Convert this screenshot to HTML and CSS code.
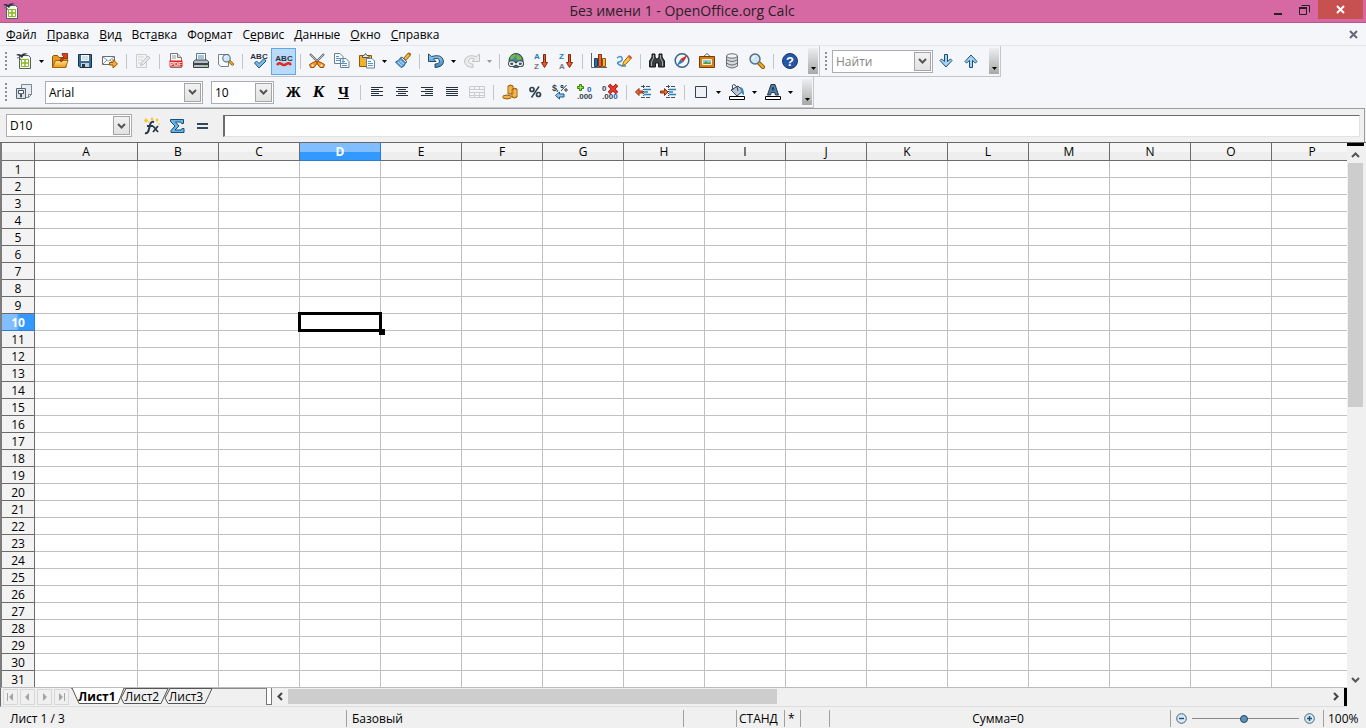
FILE: index.html
```html
<!DOCTYPE html>
<html lang="ru">
<head>
<meta charset="utf-8">
<title>Без имени 1 - OpenOffice.org Calc</title>
<link rel="stylesheet" href="styles.css">
</head>
<body>
<svg class="defs" aria-hidden="true">
  <defs>
    <linearGradient id="gold" x2="0" y2="1"><stop stop-color="#ffe08a"/><stop offset="1" stop-color="#e79a16"/></linearGradient>
    <linearGradient id="blue" x2="0" y2="1"><stop stop-color="#9ed2f3"/><stop offset="1" stop-color="#3a83bf"/></linearGradient>
    <symbol id="calc" viewBox="0 0 16 16"><path d="M3.500 2.500h9l2 2v11h-11z" fill="#f5f7f5" stroke="#555f66"/><path d="M5.500 6.500h7v7h-7z" fill="#fff" stroke="#8cb81a"/><path d="M5 10h8M9 6v8" stroke="#8cb81a" stroke-width="1.500"/><path d="M0 2q3-2 5 0q3-3 7-1q-4 0-6 4Q3 2 0 2z" fill="#26343e"/><path d="M1 5q3-2 4 2" stroke="#667" fill="none"/></symbol>
    <symbol id="combo-arrow" viewBox="0 0 9 8"><path d="M1 2l3.500 3.500L8 2" fill="none" stroke="#555" stroke-width="2"/></symbol>
    <symbol id="tri" viewBox="0 0 5 3"><path d="M0 0h5L2.500 3z" fill="currentColor"/></symbol>
    <symbol id="lens" viewBox="0 0 16 16"><path d="M10 10l4 4" stroke="#8b5a05" stroke-width="4" stroke-linecap="round"/><path d="M10 10l4 4" stroke="#f2b02e" stroke-width="2" stroke-linecap="round"/><circle cx="6" cy="6" r="5" fill="#cfe6f7" stroke="#536b80" stroke-width="1.400"/><path d="M3.500 6q0-2.500 2.500-3" stroke="#fff" fill="none"/></symbol>
    <symbol id="red-down" viewBox="0 0 7 14"><path d="M2.500.5h2v8h2l-3 5-3-5h2z" fill="#ee5a2a" stroke="#84250a"/></symbol>
    <symbol id="big-arrow" viewBox="0 0 16 16"><path d="M6.500 1.500h3v7l3-2.500 1.500 1.500-6 6.500-6-6.500L3.500 6l3 2.500z" fill="#a5d3f0" stroke="#1c4f78" stroke-linejoin="round"/></symbol>
  </defs>
</svg>

<div class="window">
  <header class="title-bar">
    <svg class="app-icon" viewBox="0 0 16 16"><use href="#calc"/></svg>
    <h1 class="title">Без имени 1 - OpenOffice.org Calc</h1>
    <div class="window-buttons">
      <button class="win-btn" aria-label="Свернуть"><svg width="9" height="12" viewBox="0 0 9 12"><path d="M0 9h8v2H0z" fill="#222"/></svg></button>
      <button class="win-btn" aria-label="Восстановить"><svg width="11" height="12" viewBox="0 0 11 12"><path d="M2.500 1.500h8v7M.5 4h7v6.500h-7z" fill="none" stroke="#222"/><path d="M0 3h8v2H0z" fill="#222"/></svg></button>
      <button class="win-btn win-close" aria-label="Закрыть"><svg width="9" height="9" viewBox="0 0 9 9"><path d="M1 1l7 7M8 1L1 8" stroke="#fff" stroke-width="2"/></svg></button>
    </div>
  </header>

  <nav class="menu-bar">
    <button class="menu"><u>Ф</u>айл</button>
    <button class="menu"><u>П</u>равка</button>
    <button class="menu"><u>В</u>ид</button>
    <button class="menu">Вст<u>а</u>вка</button>
    <button class="menu">Фо<u>р</u>мат</button>
    <button class="menu">С<u>е</u>рвис</button>
    <button class="menu"><u>Д</u>анные</button>
    <button class="menu"><u>О</u>кно</button>
    <button class="menu"><u>С</u>правка</button>
    <button class="doc-close" aria-label="Закрыть документ"><svg width="9" height="9" viewBox="0 0 9 9"><path d="M1 1l7 7M8 1L1 8" stroke="#667" stroke-width="2"/></svg></button>
  </nav>

  <div class="toolbar-row">
    <div class="toolbar">
      <span class="grip"></span>
      <button class="tool" aria-label="Создать"><svg class="icon" viewBox="0 0 16 16"><use href="#calc"/></svg></button>
      <button class="drop" aria-label="Создать: список"><svg class="tri"><use href="#tri"/></svg></button>
      <button class="tool" aria-label="Открыть"><svg class="icon" viewBox="0 0 16 16"><path d="M.5 14.500v-11l1-1h4l1.500 2h7v10z" fill="#e89a20" stroke="#8f5608"/><path d="M.5 14.500l3-7H16l-2.500 7z" fill="url(#gold)" stroke="#a5670d"/><path d="M8 8q0-3 4-4L10.500 2.500 10 .5h5.500v6L13.500 5Q10 6 10 8.500z" fill="#d94415" stroke="#7b210a" stroke-width=".8"/></svg></button>
      <button class="tool" aria-label="Сохранить"><svg class="icon" viewBox="0 0 16 16"><path d="M1.500 1.500h13v13H3l-1.500-1.500z" fill="#376d98" stroke="#16324a"/><path d="M4 2h8v6H4z" fill="#f8fafb"/><path d="M4 10h8v4H4z" fill="#c4d0d8"/><path d="M5 11h3v3H5z" fill="#20384c"/><path d="M5 4h6M5 6h6" stroke="#b6c3cc"/></svg></button>
      <button class="tool" aria-label="Отправить"><svg class="icon" viewBox="0 0 16 16"><path d="M.5 3.500h12v8H.5z" fill="#fff" stroke="#63707a"/><path d="M1 4l5.500 4L12 4M1 11l4-4M12 11L8 7" fill="none" stroke="#8d989f"/><path d="M7.500 9.500H11v-3l4.500 4.500-4.500 4v-3H7.500z" fill="#f8ad35" stroke="#9a5807"/></svg></button>
      <span class="sep"></span>
      <button class="tool" disabled aria-label="Режим правки"><svg class="icon faded" viewBox="0 0 16 16"><path d="M1.500 1.500h10v13h-10z" fill="#f4f4f4" stroke="#aaa"/><path d="M3 4h6M3 7h5M3 10h3" stroke="#bbb"/><path d="M5.500 12.500l1-3L13 3l2 2-6.500 6.500z" fill="#ddd" stroke="#999"/></svg></button>
      <span class="sep"></span>
      <button class="tool" aria-label="Экспорт в PDF"><svg class="icon" viewBox="0 0 16 16"><path d="M2.500.5h7l4 4v10h-11z" fill="#fafafa" stroke="#777"/><path d="M9.500.5v4h4" fill="#ddd" stroke="#777"/><path d="M4 3h4M4 5h4" stroke="#9a9a9a"/><rect x="1.500" y="7.500" width="13" height="6" fill="#e61f18"/><text x="8" y="13" font-size="6" font-weight="bold" fill="#fff" text-anchor="middle">PDF</text></svg></button>
      <button class="tool" aria-label="Печать"><svg class="icon" viewBox="0 0 16 16"><path d="M3.500.5h9v8h-9z" fill="#fff" stroke="#66727b"/><path d="M5 3h6M5 5h6" stroke="#448bc0"/><path d="M.5 8.500l2-1.500h11l2 1.500v6H.5z" fill="#b7bfc5" stroke="#354048"/><path d="M1 10h14v2H1z" fill="#39444d"/><path d="M11 12.500h3" stroke="#8fd33a"/></svg></button>
      <button class="tool" aria-label="Предварительный просмотр"><svg class="icon" viewBox="0 0 16 16"><path d="M.5 1.500h10v12H3l-2.500-2z" fill="#f8fafb" stroke="#77838b"/><svg x="4" y="0" width="12" height="15" viewBox="0 0 16 18"><use href="#lens" width="16" height="16"/></svg></svg></button>
      <span class="sep"></span>
      <button class="tool" aria-label="Орфография"><svg class="icon" viewBox="0 0 16 16"><text x="8" y="6" font-size="8" font-weight="bold" fill="#28323e" text-anchor="middle">ABC</text><path d="M3.500 10l2-2 2.500 2.500L13 5.500 15 8l-7 7z" fill="#7ab9e8" stroke="#1e5582"/></svg></button>
      <button class="tool pressed" aria-pressed="true" aria-label="Автопроверка орфографии"><svg class="icon" viewBox="0 0 16 16"><text x="8" y="8" font-size="8" font-weight="bold" fill="#28323e" text-anchor="middle">ABC</text><path d="M1 12q2-3 4.500-1t5 0 4.500 1" fill="none" stroke="#df2b20" stroke-width="2.500"/></svg></button>
      <span class="sep"></span>
      <button class="tool" aria-label="Вырезать"><svg class="icon" viewBox="0 0 16 16"><path d="M1 1l10 10M15 1L5 11" stroke="#5b656c" stroke-width="2"/><path d="M1.500 1.500l9 9M14.500 1.500l-9 9" stroke="#d5dadd" stroke-width=".8"/><path d="M8 8L4 9.500.500 11.500l1 3 3.500 0 3-4zM8 8l4 1.500 3.500 2-1 3-3.500 0-3-4z" fill="#f2962b" stroke="#a34c05"/><circle cx="3.500" cy="12.500" r="1" fill="#fff"/><circle cx="12.500" cy="12.500" r="1" fill="#fff"/></svg></button>
      <button class="tool" aria-label="Копировать"><svg class="icon" viewBox="0 0 16 16"><path d="M.5.500H6l3 3v7H.5zM6.500 5.500H12l3 3v6H6.500z" fill="#f7fbfe" stroke="#688293"/><path d="M2 3.500h3M2 5.500h4M2 7.500h4M8 8.500h3M8 10.500h5M8 12.500h5" stroke="#5796c3"/></svg></button>
      <button class="tool" aria-label="Вставить"><svg class="icon" viewBox="0 0 16 16"><path d="M.5 2.500h12v11H.5z" fill="#f2b12d" stroke="#8d5a08"/><path d="M3.500 4.500v-2h1.500l1.500-2 1.500 2h2v2z" fill="#e8eaec" stroke="#555"/><path d="M7.500 5.500H13l2.500 2.500v7h-8z" fill="#f7fbfe" stroke="#688293"/><path d="M9 8.500h3M9 10.500h5M9 12.500h5" stroke="#5796c3"/></svg></button>
      <button class="drop" aria-label="Вставить: список"><svg class="tri"><use href="#tri"/></svg></button>
      <button class="tool" aria-label="Формат по образцу"><svg class="icon" viewBox="0 0 16 16"><path d="M10 6l4-4.500" stroke="#9a650a" stroke-width="4" stroke-linecap="round"/><path d="M10 6l4-4.500" stroke="#f4bd43" stroke-width="2"/><path d="M7 4l5 5-2 1-5-5z" fill="#dfe6eb" stroke="#516474"/><path d="M5.500 5L10.500 10q-1 4-4.500 4.500L.5 9Q3 8.500 5.500 5z" fill="#67aadb" stroke="#245e90"/><path d="M3 9l4 4M5 8l4 3" stroke="#b8dcf3"/></svg></button>
      <span class="sep"></span>
      <button class="tool" aria-label="Отменить"><svg class="icon" viewBox="0 0 16 16"><path d="M.5 1v7.500H8L5.500 6Q11 4 11.500 8q0 3-4.500 3v3.500Q15.500 14 15.500 8 14 .5 3.500 3.500z" fill="url(#blue)" stroke="#244b6d"/></svg></button>
      <button class="drop" aria-label="Отменить: список"><svg class="tri"><use href="#tri"/></svg></button>
      <button class="tool" disabled aria-label="Вернуть"><svg class="icon faded" viewBox="0 0 16 16"><path d="M15.500 1v7.500H8L10.500 6Q5 4 4.500 8q0 3 4.500 3v3.500Q.5 14 .5 8 2 .5 12.500 3.500z" fill="#e2e4e6" stroke="#999"/></svg></button>
      <button class="drop" disabled aria-label="Вернуть: список"><svg class="tri"><use href="#tri"/></svg></button>
      <span class="sep"></span>
      <button class="tool" aria-label="Гиперссылка"><svg class="icon" viewBox="0 0 16 16"><circle cx="8" cy="7.500" r="7" fill="#4886a0" stroke="#284b50"/><path d="M2 4q4-4 6-2l-2 3-3 2zM9 1l5 4-3 3-3-3z" fill="#77b641"/><rect x="1.500" y="9" width="5" height="3.500" rx="1.700" fill="none" stroke="#243238" stroke-width="3"/><rect x="9.500" y="9" width="5" height="3.500" rx="1.700" fill="none" stroke="#243238" stroke-width="3"/><rect x="1.500" y="9" width="5" height="3.500" rx="1.700" fill="none" stroke="#e8ecee" stroke-width="1.400"/><rect x="9.500" y="9" width="5" height="3.500" rx="1.700" fill="none" stroke="#e8ecee" stroke-width="1.400"/><path d="M5 11h6" stroke="#fff" stroke-width="1.500"/></svg></button>
      <button class="tool" aria-label="Сортировка по возрастанию"><svg class="icon" viewBox="0 0 16 16"><text x="1" y="6" font-size="8" font-weight="bold" fill="#1b7fbd">A</text><text x="1" y="16" font-size="8" font-weight="bold" fill="#777">Z</text><use href="#red-down" x="8" y="1" width="7" height="14"/></svg></button>
      <button class="tool" aria-label="Сортировка по убыванию"><svg class="icon" viewBox="0 0 16 16"><text x="1" y="6" font-size="8" font-weight="bold" fill="#1b7fbd">Z</text><text x="1" y="16" font-size="8" font-weight="bold" fill="#777">A</text><use href="#red-down" x="8" y="1" width="7" height="14"/></svg></button>
      <span class="sep"></span>
      <button class="tool" aria-label="Диаграмма"><svg class="icon" viewBox="0 0 16 16"><path d="M.5 0v14.500H16" fill="none" stroke="#59636b"/><path d="M3.500 5.500h3v8h-3z" fill="#28709f" stroke="#154363"/><path d="M7.500 1.500h3v12h-3z" fill="#ee6730" stroke="#8f2e0b"/><path d="M11.500 5.500h3v8h-3z" fill="#f6b53e" stroke="#8d5a08"/></svg></button>
      <button class="tool" aria-label="Функции рисования"><svg class="icon" viewBox="0 0 16 16"><path d="M1 5q4-3 5 0t-3 4 3 4h4" fill="none" stroke="#3d92d1" stroke-width="1.500"/><path d="M6.500 12.500l1-3.500L13 2.500l2.500 2.500-6 6.500z" fill="#f9c947" stroke="#9a650a"/><path d="M12 4l1.500-2 2.500 2.500-2 1.500z" fill="#dd5048"/></svg></button>
      <span class="sep"></span>
      <button class="tool" aria-label="Найти и заменить"><svg class="icon" viewBox="0 0 16 16"><path d="M3 1h3v3l1.500 2h1L10 4V1h3v3l2.500 4v6H9.500v-4h-3v4H.5V8L3 4z" fill="#3b3f42" stroke="#17191a"/><path d="M4.500 2v3l-2 4v4M11.500 2v3l2 4v4" fill="none" stroke="#a5abb0"/></svg></button>
      <button class="tool" aria-label="Навигатор"><svg class="icon" viewBox="0 0 16 16"><circle cx="8" cy="7.500" r="6.800" fill="#f4f9fd" stroke="#376488" stroke-width="1.500"/><path d="M13.500 2L9.500 9 6.500 6z" fill="#e0281c"/><path d="M2.500 13l4-7 3 3z" fill="#337cbc"/></svg></button>
      <button class="tool" aria-label="Галерея"><svg class="icon" viewBox="0 0 16 16"><path d="M4 4l4-3.500L12 4" fill="none" stroke="#666"/><path d="M.5 3.500h15v11H.5z" fill="#d67b19" stroke="#763b05"/><path d="M3.500 6.500h9v5h-9z" fill="#82c7ee" stroke="#fff0b8"/><path d="M4 11l3-3 2 2 2-1 1 2z" fill="#579736"/></svg></button>
      <button class="tool" aria-label="Источники данных"><svg class="icon" viewBox="0 0 16 16"><path d="M2.500 3v10q5.500 4 11 0V3" fill="#d4d8db" stroke="#686f75"/><ellipse cx="8" cy="3" rx="5.500" ry="2.200" fill="#f2f4f5" stroke="#686f75"/><path d="M2.500 6.500q5.500 4 11 0M2.500 10q5.500 4 11 0" fill="none" stroke="#686f75"/></svg></button>
      <button class="tool" aria-label="Масштаб"><svg class="icon" viewBox="0 0 16 16"><use href="#lens"/></svg></button>
      <span class="sep"></span>
      <button class="tool" aria-label="Справка OpenOffice.org"><svg class="icon" viewBox="0 0 16 16"><circle cx="8" cy="8" r="7.500" fill="#2755a5" stroke="#173774"/><text x="8" y="13" font-size="13" font-weight="bold" fill="#fff" text-anchor="middle">?</text></svg></button>
      <button class="more" aria-label="Ещё"><svg class="tri"><use href="#tri"/></svg></button>
    </div>
    <div class="toolbar">
      <span class="grip"></span>
      <div class="combo find"><input class="combo-input" aria-label="Найти" placeholder="Найти"><button class="combo-btn" aria-label="Список поиска"><svg class="chev"><use href="#combo-arrow"/></svg></button></div>
      <button class="tool" aria-label="Найти следующее"><svg class="icon" viewBox="0 0 16 16"><use href="#big-arrow"/></svg></button>
      <button class="tool" aria-label="Найти предыдущее"><svg class="icon" viewBox="0 0 16 16"><use href="#big-arrow" transform="rotate(180 8 8)"/></svg></button>
      <button class="more" aria-label="Ещё"><svg class="tri"><use href="#tri"/></svg></button>
    </div>
  </div>

  <div class="toolbar-row format-row">
    <div class="toolbar">
      <span class="grip"></span>
      <button class="tool" aria-label="Стили"><svg class="icon" viewBox="0 0 16 16"><path d="M5.500.5h10v10l-3 3h-7z" fill="#e7ecf0" stroke="#7b8791"/><path d="M12.500 13.500v-3h3z" fill="#fff" stroke="#7b8791"/><path d="M.5 4.500h9v10h-9z" fill="#dbe1e6" stroke="#5b6873"/><path d="M2.500 6.500h5v3h-2V13h-1V9.500h-2z" fill="#fff" stroke="#46525c"/></svg></button>
      <div class="combo font-name"><input class="combo-input" aria-label="Шрифт" value="Arial"><button class="combo-btn" aria-label="Список шрифтов"><svg class="chev"><use href="#combo-arrow"/></svg></button></div>
      <div class="combo font-size"><input class="combo-input" aria-label="Размер" value="10"><button class="combo-btn" aria-label="Список размеров"><svg class="chev"><use href="#combo-arrow"/></svg></button></div>
      <button class="tool letter bold">Ж</button>
      <button class="tool letter italic">К</button>
      <button class="tool letter under">Ч</button>
      <span class="sep"></span>
      <button class="tool" aria-label="По левому краю"><svg class="icon" viewBox="0 0 16 16"><path d="M2 3.500h12M2 5.500h8M2 7.500h12M2 9.500h8M2 11.500h12" stroke="#26313a"/></svg></button>
      <button class="tool" aria-label="По центру"><svg class="icon" viewBox="0 0 16 16"><path d="M2 3.500h12M4 5.500h8M2 7.500h12M4 9.500h8M2 11.500h12" stroke="#26313a"/></svg></button>
      <button class="tool" aria-label="По правому краю"><svg class="icon" viewBox="0 0 16 16"><path d="M2 3.500h12M6 5.500h8M2 7.500h12M6 9.500h8M2 11.500h12" stroke="#26313a"/></svg></button>
      <button class="tool" aria-label="По ширине"><svg class="icon" viewBox="0 0 16 16"><path d="M2 3.500h12M2 5.500h12M2 7.500h12M2 9.500h12M2 11.500h12" stroke="#26313a"/></svg></button>
      <button class="tool" disabled aria-label="Объединить ячейки"><svg class="icon" viewBox="0 0 16 16"><path d="M.5 2.500h15v11H.5zM.5 5.500h15M.5 8.500h15M.5 11.500h15M5.500 2v4M10.500 2v4M5.500 9v5M10.500 9v5" fill="none" stroke="#c9cbcd"/></svg></button>
      <span class="sep"></span>
      <button class="tool" aria-label="Денежный формат"><svg class="icon" viewBox="0 0 16 16"><path d="M6 2q3-2 5 0v8H6zM10 5q3-1.500 5 0v8q-3 2-5 0zM1 12q3-2 8 0v2q-4 2-8 0z" fill="#f0a830" stroke="#98590b"/><path d="M6 4h5M6 6h4M6 8h4M10 7h5M10 9h5M10 11h5M1 13h8" stroke="#ffd676" stroke-width=".6"/></svg></button>
      <button class="tool" aria-label="Процентный формат"><svg class="icon" viewBox="0 0 16 16"><path d="M12 2.500L4.500 13.500" stroke="#33424f" stroke-width="1.500"/><circle cx="5" cy="5.500" r="2" fill="none" stroke="#33424f" stroke-width="1.700"/><circle cx="11.500" cy="10.500" r="2" fill="none" stroke="#33424f" stroke-width="1.700"/></svg></button>
      <button class="tool" aria-label="Стандартный формат"><svg class="icon" viewBox="0 0 16 16"><text x="0" y="7" font-size="9" font-weight="bold" fill="#33424f">$</text><path d="M14.500 1L9 7M9 1.500h2v2H9zM13 5h2v2h-2z" fill="none" stroke="#33424f"/><path d="M6 6l-1 2" stroke="#33424f"/><path d="M3.500 11.500l4-3.500v2H12v3H7.500v2z" fill="#8dc9ef" stroke="#1c5787"/></svg></button>
      <button class="tool" aria-label="Добавить разряд"><svg class="icon" viewBox="0 0 16 16"><path d="M2.500.5h2v2h2v2h-2v2h-2v-2h-2v-2h2z" fill="#9ade43" stroke="#33810d"/><text x="10" y="8" font-size="8" font-weight="bold" fill="#2460c8">0</text><text x="0" y="15" font-size="8" font-weight="bold" fill="#33424f">.000</text></svg></button>
      <button class="tool" aria-label="Удалить разряд"><svg class="icon" viewBox="0 0 16 16"><text x="0" y="7" font-size="8" font-weight="bold" fill="#33424f">0</text><text x="0" y="15" font-size="8" font-weight="bold" fill="#33424f">.00<tspan fill="#2460c8">0</tspan></text><path d="M7 1l8 8M15 1L7 9" stroke="#8d1009" stroke-width="3.500"/><path d="M7 1l8 8M15 1L7 9" stroke="#ee3a29" stroke-width="2"/></svg></button>
      <span class="sep"></span>
      <button class="tool" aria-label="Уменьшить отступ"><svg class="icon" viewBox="0 0 16 16"><path d="M6 2.500h10M6 13.500h10" stroke="#44515b" stroke-dasharray="4 1"/><path d="M9 5.500h7M9 8h4M9 10.500h7" stroke="#2582bb" stroke-width="1.600"/><path d="M8.500 1v14" stroke="#44515b" stroke-dasharray="1 1"/><path d="M.5 8L4 4.500v2.500h4v2H4V11.500z" fill="#ee6730" stroke="#8f2e0b"/></svg></button>
      <button class="tool" aria-label="Увеличить отступ"><svg class="icon" viewBox="0 0 16 16"><path d="M6 2.500h10M6 13.500h10" stroke="#44515b" stroke-dasharray="4 1"/><path d="M9 5.500h7M9 8h4M9 10.500h7" stroke="#2582bb" stroke-width="1.600"/><path d="M8.500 1v14" stroke="#44515b" stroke-dasharray="1 1"/><path d="M8 8L4.500 4.500v2.500h-4v2h4V11.500z" fill="#ee6730" stroke="#8f2e0b"/></svg></button>
      <span class="sep"></span>
      <button class="tool" aria-label="Обрамление"><svg class="icon" viewBox="0 0 16 16"><path d="M2.500 2.500h11v11h-11z" fill="#eef2f7" stroke="#35424d"/></svg></button>
      <button class="drop" aria-label="Обрамление: список"><svg class="tri"><use href="#tri"/></svg></button>
      <button class="tool" aria-label="Цвет фона"><svg class="icon" viewBox="0 0 16 16"><path d="M2 6l7-4 5 5-6 5z" fill="#b9c6d0" stroke="#33424f"/><path d="M4 6Q2-1 6 1q3 2 3 6" fill="none" stroke="#33424f"/><path d="M11 3q4 0 4 8-2 0-3-4z" fill="#368cc4"/><path d="M.5 12.500h15v3H.5z" fill="#fff" stroke="#000"/></svg></button>
      <button class="drop" aria-label="Цвет фона: список"><svg class="tri"><use href="#tri"/></svg></button>
      <button class="tool" aria-label="Цвет шрифта"><svg class="icon" viewBox="0 0 16 16"><path d="M2.500 11L6 .5h4L13.500 11h-3l-.8-2.500H6.300L5.500 11zM7 6h2L8 3z" fill="#4a7fa6" stroke="#23394b" fill-rule="evenodd"/><path d="M.5 12.500h15v3H.5z" fill="#fff" stroke="#000"/></svg></button>
      <button class="drop" aria-label="Цвет шрифта: список"><svg class="tri"><use href="#tri"/></svg></button>
      <button class="more" aria-label="Ещё"><svg class="tri"><use href="#tri"/></svg></button>
    </div>
  </div>

  <div class="formula-bar">
    <div class="combo cell-name"><input class="combo-input" aria-label="Ячейка" value="D10"><button class="combo-btn" aria-label="Список имён"><svg class="chev"><use href="#combo-arrow"/></svg></button></div>
    <div class="formula-tools">
      <button class="tool" aria-label="Мастер функций"><svg class="icon" viewBox="0 0 16 16"><path d="M1 15q3 1 4-4l1-4q1-4 4-3M3 8h6" fill="none" stroke="#26394c" stroke-width="2"/><path d="M9 8l5 6M14 8l-5 6" stroke="#26394c" stroke-width="1.800"/><path d="M2 0l2 2.500L2 5 0 2.500zM8-1l1.500 2L8 3 6.500 1zM13 0l1.500 2L13 4l-1.500-2zM15 5l1 1-1 1-1-1zM5 3l1 1-1 1-1-1z" fill="#f6c621"/></svg></button>
      <button class="tool" aria-label="Сумма"><svg class="icon" viewBox="0 0 16 16"><path d="M1.500 1.500h13v4h-2l-1-1.500H6.500L10 8l-4 4h6l1-1.500h2v4h-13v-2L6 8 1.500 3.500z" fill="#69b3e4" stroke="#174f7d" stroke-linejoin="round"/></svg></button>
      <button class="tool" aria-label="Функция"><svg class="icon" viewBox="0 0 16 16"><path d="M3 6h11M3 10h11" stroke="#33475a" stroke-width="2"/></svg></button>
    </div>
    <input class="formula-input" aria-label="Строка ввода">
  </div>

  <main class="sheet">
    <div class="grid-area">
      <table class="grid">
        <thead><tr id="columns"><th class="corner"></th></tr></thead>
        <tbody id="rows"></tbody>
      </table>
    </div>
    <div class="v-scroll">
      <span class="split-h"></span>
      <button class="scroll-btn" aria-label="Вверх"><svg width="9" height="8" viewBox="0 0 9 8"><path d="M1 6l3.500-3.500L8 6" fill="none" stroke="#555" stroke-width="2"/></svg></button>
      <div class="v-track"><div class="v-thumb"></div></div>
      <button class="scroll-btn" aria-label="Вниз"><svg class="chev"><use href="#combo-arrow"/></svg></button>
    </div>
  </main>

  <div class="sheet-bar">
    <div class="tab-area">
      <button class="nav" aria-label="Первый лист"><svg width="9" height="8" viewBox="0 0 9 8"><path d="M1 0h1v8H1zM7 0v8L3 4z" fill="#a4a4a4"/></svg></button>
      <button class="nav" aria-label="Предыдущий лист"><svg width="9" height="8" viewBox="0 0 9 8"><path d="M6 0v8L2 4z" fill="#a4a4a4"/></svg></button>
      <button class="nav" aria-label="Следующий лист"><svg width="9" height="8" viewBox="0 0 9 8"><path d="M3 0v8l4-4z" fill="#a4a4a4"/></svg></button>
      <button class="nav" aria-label="Последний лист"><svg width="9" height="8" viewBox="0 0 9 8"><path d="M2 0v8l4-4zM7 0h1v8H7z" fill="#a4a4a4"/></svg></button>
      <div class="tabs">
        <button class="tab active"><svg class="tab-shape" viewBox="0 0 54 17"><path d="M1 0l7 15.500h39L53 0" fill="#fff" stroke="#555"/></svg><span>Лист1</span></button>
        <button class="tab"><svg class="tab-shape" viewBox="0 0 54 17"><path d="M9 .5h42L44 15.500H7L4 10z" fill="#f0f0f0" stroke="#555"/></svg><span>Лист2</span></button>
        <button class="tab"><svg class="tab-shape" viewBox="0 0 54 17"><path d="M9 .5h42L44 15.500H7L4 10z" fill="#f0f0f0" stroke="#555"/></svg><span>Лист3</span></button>
      </div>
      <span class="tab-split"></span>
    </div>
    <div class="h-scroll">
      <button class="scroll-btn" aria-label="Влево"><svg width="8" height="9" viewBox="0 0 8 9"><path d="M6 1L2.500 4.500 6 8" fill="none" stroke="#444" stroke-width="2"/></svg></button>
      <div class="h-track"><div class="h-thumb"></div></div>
      <button class="scroll-btn" aria-label="Вправо"><svg width="8" height="9" viewBox="0 0 8 9"><path d="M2 1l3.500 3.500L2 8" fill="none" stroke="#444" stroke-width="2"/></svg></button>
      <span class="split-v"></span>
    </div>
  </div>

  <footer class="status-bar">
    <span class="status sheet-no">Лист 1 / 3</span>
    <span class="status page-style">Базовый</span>
    <span class="status blank"></span>
    <span class="status mode">СТАНД</span>
    <span class="status modified">*</span>
    <span class="status sign"></span>
    <span class="status sum">Сумма=0</span>
    <div class="status zoom">
      <button class="zoom-btn" aria-label="Уменьшить"><svg width="11" height="11" viewBox="0 0 11 11"><circle cx="5.500" cy="5.500" r="4.800" fill="#d4e9f6" stroke="#4e6170"/><path d="M3 5.500h5" stroke="#1d4e77" stroke-width="1.400"/></svg></button>
      <input class="zoom-range" type="range" aria-label="Масштаб" min="0" max="100" value="48">
      <button class="zoom-btn" aria-label="Увеличить"><svg width="11" height="11" viewBox="0 0 11 11"><circle cx="5.500" cy="5.500" r="4.800" fill="#d4e9f6" stroke="#4e6170"/><path d="M3 5.500h5M5.500 3v5" stroke="#1d4e77" stroke-width="1.400"/></svg></button>
    </div>
    <span class="status percent">100%</span>
  </footer>
</div>
<script src="grid.js"></script>
</body>
</html>
```
FILE: styles.css
```css
* { box-sizing: border-box; }
body {
  margin: 0;
  font-family: "Open Sans", "Noto Sans", sans-serif;
  font-size: 12px;
  line-height: 16px;
  color: #000;
  background: #f0f0f0;
}
button, input { font: inherit; color: inherit; margin: 0; padding: 0; border: 0; background: none; border-radius: 0; }
.defs { position: absolute; width: 0; height: 0; }
.window { display: flex; flex-direction: column; height: 100vh; overflow: hidden; }

.title-bar { display: flex; flex: none; align-items: center; height: 23px; background: #d669a3; border-bottom: 1px solid #b9588b; }
.app-icon { width: 16px; height: 16px; margin-left: 3px; }
.title { flex: 1; margin: 0; padding-left: 80px; text-align: center; font-size: 14px; font-weight: normal; line-height: 22px; color: #2b2028; }
.window-buttons { display: flex; align-self: flex-start; margin-right: 3px; }
.win-btn { display: flex; align-items: center; justify-content: center; width: 26px; height: 19px; }
.win-close { width: 45px; margin-left: 1px; background: #c75050; }

.menu-bar { display: flex; flex: none; align-items: center; height: 23px; padding: 1px 0 0 6px; gap: 10px; background: #f4f6f9; border-bottom: 1px solid #e4e6e9; }
.menu { white-space: nowrap; }
.doc-close { display: flex; margin-left: auto; margin-right: 8px; }

.toolbar-row { display: flex; flex: none; background: #f4f6f9; height: 31px; }
.toolbar { display: flex; align-items: center; padding-left: 5px; border-right: 1px solid #c3c5c8; border-bottom: 1px solid #c3c5c8; }
.grip { width: 2px; height: 19px; margin-right: 4px; background: repeating-linear-gradient(#8b8e92 0 2px, transparent 2px 4px); }
.tool { display: flex; flex: none; align-items: center; justify-content: center; width: 25px; height: 27px; }
.pressed { background: #b9dbf9; border: 1px solid #5ea7e8; }
.icon { width: 16px; height: 16px; overflow: visible; font-family: "Liberation Sans", sans-serif; }
.faded { opacity: 0.55; }
.drop { display: flex; flex: none; align-items: center; justify-content: center; width: 11px; height: 27px; }
.drop:disabled { color: #999; }
.tri { display: block; width: 5px; height: 3px; }
.chev { width: 9px; height: 8px; }
.sep { flex: none; width: 8px; height: 15px; background: linear-gradient(#c2c4c7, #c2c4c7) 4px 0 / 1px 100% no-repeat; }
.more { display: flex; align-items: flex-end; justify-content: center; width: 10px; height: 26px; padding-bottom: 4px; margin: 0 1px 0 6px; background: linear-gradient(#eceef0, #a8a8a8); }

.combo { display: flex; flex: none; align-items: center; height: 23px; padding: 1px; border: 1px solid #abadb3; background: #fff; }
.combo-input { flex: 1; min-width: 0; height: 19px; padding-left: 2px; outline: 0; }
.combo-input::placeholder { color: #858585; opacity: 1; }
.combo-btn { display: flex; align-items: center; justify-content: center; width: 17px; height: 19px; border: 1px solid #a5a5a5; background: linear-gradient(#f2f2f2, #e2e2e2); }
.find { width: 101px; margin-left: 1px; }
.font-name { width: 158px; margin-left: 9px; }
.font-size { width: 63px; margin: 0 7px 0 8px; }
.letter { font-family: "Liberation Serif", serif; font-size: 15px; font-weight: bold; line-height: 18px; }
.italic { font-size: 17px; font-style: italic; }
.under { text-decoration: underline; }

.formula-bar { display: flex; flex: none; align-items: center; height: 34px; margin-right: 1px; padding: 0 4px 0 6px; border-top: 1px solid #9c9c9c; border-right: 1px solid #9c9c9c; background: #f0f0f0; }
.cell-name { width: 126px; }
.formula-tools { display: flex; margin: 0 9px 0 7px; }
.formula-input { flex: 1; min-width: 0; height: 22px; border: 1px solid #e2e2e2; border-top: 1px solid #6b6b6b; border-left: 2px solid #6b6b6b; background: #fff; }

.sheet { display: flex; flex: 1; min-height: 0; border-top: 1px solid #696969; }
.grid-area { flex: 1; min-width: 0; overflow: hidden; background: #fff; border-left: 2px solid #7c7c7c; border-bottom: 1px solid #bbb; }
.grid { width: 1351px; table-layout: fixed; border-collapse: separate; border-spacing: 0; }
.grid th, .grid td { height: 17px; padding: 0; border-right: 1px solid #c0c0c0; border-bottom: 1px solid #c0c0c0; line-height: 16px; }
.grid th { font-weight: normal; text-align: center; border-color: #6b6b6b; background: #f3f3f3; }
.grid tbody th { padding-top: 2px; line-height: 14px; }
.grid thead th { width: 81px; height: 18px; background: linear-gradient(#f6f6f6 0 50%, #eee 50% 100%); }
.grid thead .corner { width: 33px; }
.grid thead .first { width: 103px; }
.grid .selected { color: #fff; font-weight: bold; border-color: #2d7dd2; }
.grid thead .selected { background: linear-gradient(#80beff 0 50%, #3399ff 50% 100%); }
.grid tbody .selected { background: linear-gradient(90deg, #80beff 0 45%, #3399ff 55% 100%); }
.grid .current { position: relative; }
.cursor { position: absolute; inset: -2px; border: 3px solid #000; }
.cursor::after { content: ""; position: absolute; right: -6px; bottom: -6px; width: 6px; height: 6px; background: #000; }

.v-scroll { display: flex; flex: none; flex-direction: column; width: 17px; margin-right: 2px; background: #f0f0f0; }
.split-h { height: 3px; background: #000; }
.scroll-btn { display: flex; flex: none; align-items: center; justify-content: center; width: 16px; height: 17px; }
.v-track { flex: 1; padding: 0 1px; }
.v-thumb { height: 48%; background: #cdcdcd; }

.sheet-bar { display: flex; flex: none; height: 19px; border-bottom: 1px solid #dedede; margin-right: 19px; border-left: 1px solid #696969; }
.tab-area { display: flex; flex: none; width: 271px; padding-left: 2px; align-items: flex-start; }
.nav { display: flex; align-items: center; justify-content: center; flex: none; width: 15px; height: 16px; margin: 1px 2px 0 0; border: 1px solid #d8d8d8; }
.tabs { display: flex; flex: 1; height: 17px; border-top: 1px solid #8a8a8a; }
.tab { position: relative; width: 54px; height: 17px; margin: -1px -10px 0 0; padding-right: 4px; }
.tab.active { z-index: 1; margin-right: -8px; padding-right: 2px; }
.tab-shape { position: absolute; inset: 0; width: 54px; height: 17px; }
.tab span { position: relative; }
.active { font-weight: bold; }
.tab-split { width: 6px; height: 17px; border: 1px solid #777; border-top: 0; background: #fff; }
.h-scroll { display: flex; flex: 1; min-width: 0; }
.h-track { flex: 1; height: 16px; padding-top: 1px; }
.h-thumb { width: 47%; height: 15px; background: #cdcdcd; }
.split-v { width: 3px; background: #000; }

.status-bar { display: flex; flex: none; align-items: center; height: 21px; padding-top: 2px; }
.status { display: flex; align-items: center; height: 17px; border-left: 1px solid #a0a0a0; white-space: nowrap; }
.sheet-no { width: 346px; padding-left: 10px; border-left: 0; }
.page-style { flex: 1; padding-left: 5px; }
.blank { width: 53px; }
.mode { width: 48px; padding-left: 2px; }
.modified { width: 16px; padding-left: 3px; }
.sign { width: 29px; }
.sum { width: 341px; padding-right: 4px; justify-content: center; }
.zoom { width: 153px; padding: 0 8px 0 5px; }
.zoom-btn { display: flex; flex: none; }
.zoom-range { flex: 1; min-width: 0; height: 15px; margin: 0 5px; appearance: none; background: linear-gradient(#8a8a8a, #8a8a8a) 0 7px / 100% 1px no-repeat; }
.zoom-range::-webkit-slider-thumb { appearance: none; width: 8px; height: 8px; border: 1px solid #26445c; border-radius: 50%; background: #5c92ba; }
.percent { width: 43px; padding-left: 4px; }
```
FILE: grid.js
```js
const COLUMNS = "ABCDEFGHIJKLMNOP".split("");
const ROWS = 31;
const current = { column: "D", row: 10 };

const head = document.getElementById("columns");
COLUMNS.forEach((name, index) => {
  const th = document.createElement("th");
  th.scope = "col";
  th.textContent = name;
  if (index === 0) th.classList.add("first");
  if (name === current.column) th.classList.add("selected");
  head.append(th);
});

const body = document.getElementById("rows");
for (let row = 1; row <= ROWS; row++) {
  const tr = document.createElement("tr");
  const th = document.createElement("th");
  th.scope = "row";
  th.textContent = row;
  if (row === current.row) th.classList.add("selected");
  tr.append(th);
  COLUMNS.forEach((name) => {
    const td = document.createElement("td");
    if (row === current.row && name === current.column) {
      td.classList.add("current");
      const cursor = document.createElement("span");
      cursor.className = "cursor";
      td.append(cursor);
    }
    tr.append(td);
  });
  body.append(tr);
}
```
